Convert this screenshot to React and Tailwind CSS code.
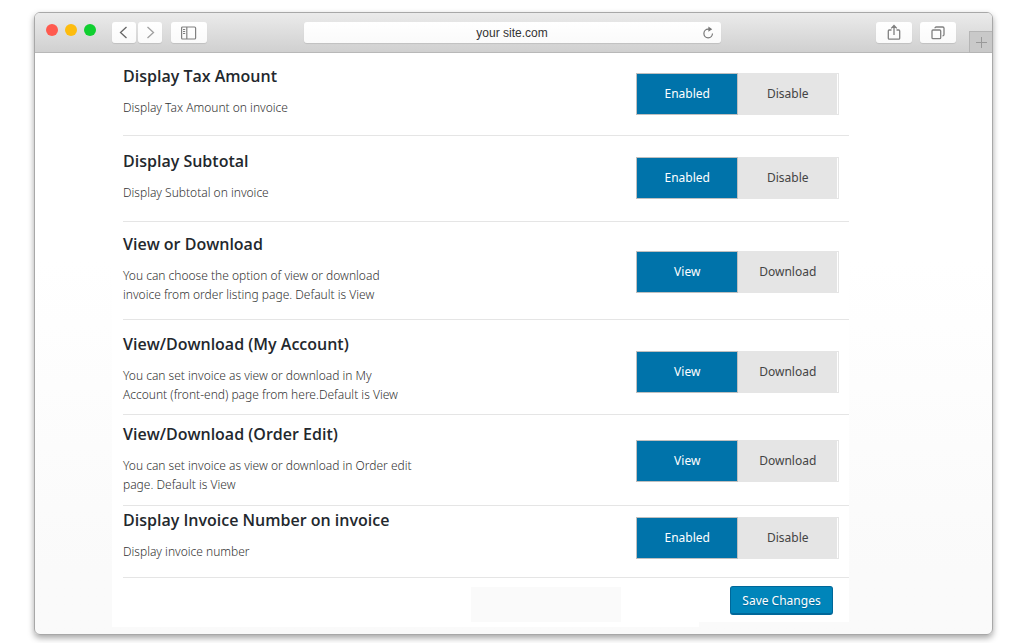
import React, { useState } from 'react';

const SETTINGS = [
  { id: 'tax', title: 'Display Tax Amount', text: 'Display Tax Amount on invoice', options: ['Enabled', 'Disable'], row: 'pt-[11px] pb-[18px]', toggle: 'mt-[9px]' },
  { id: 'subtotal', title: 'Display Subtotal', text: 'Display Subtotal on invoice', options: ['Enabled', 'Disable'], row: 'pt-[13px] pb-[19px]', toggle: 'mt-2' },
  { id: 'listing', title: 'View or Download', text: 'You can choose the option of view or download\ninvoice from order listing page. Default is View', options: ['View', 'Download'], row: 'pt-[10px] pb-[15px]', toggle: 'mt-[19px]' },
  { id: 'account', title: 'View/Download (My Account)', text: 'You can set invoice as view or download in My\nAccount (front-end) page from here.Default is View', options: ['View', 'Download'], row: 'pt-3 pb-[10px]', toggle: 'mt-[19px]' },
  { id: 'order', title: 'View/Download (Order Edit)', text: 'You can set invoice as view or download in Order edit\npage. Default is View', options: ['View', 'Download'], row: 'pt-[7px] pb-[11px]', toggle: 'mt-[18px]' },
  { id: 'number', title: 'Display Invoice Number on invoice', text: 'Display invoice number', options: ['Enabled', 'Disable'], row: 'pt-[2px] pb-4', toggle: 'mt-[9px]' },
];

const toolButton = 'flex h-[21px] items-center justify-center rounded-[3px] bg-gradient-to-b from-white to-[#fafafa] shadow-[0_1px_1px_rgba(0,0,0,0.1)]';

const TitleBar = () => (
  <header className="flex h-10 items-start rounded-t-[5px] border-b border-[#b8b8b8] bg-gradient-to-b from-[#ebebeb] to-[#d0d0d0]">
    <div className="flex gap-[7px] pt-[11px] pl-[11px]">
      <span className="size-3 rounded-full bg-[#ff5a4f]" />
      <span className="size-3 rounded-full bg-[#fdbc0e]" />
      <span className="size-3 rounded-full bg-[#10cf30]" />
    </div>

    <div className="ml-4 flex gap-[2px] pt-[9px]">
      <button aria-label="Back" className={`${toolButton} w-6`}>
        <svg width="24" height="21" fill="none" stroke="#666" strokeWidth="1.3"><path d="M14.5 5 8.5 10.5 14.5 16" /></svg>
      </button>
      <button aria-label="Forward" className={`${toolButton} w-6`}>
        <svg width="24" height="21" fill="none" stroke="#a0a0a0" strokeWidth="1.3"><path d="M9.5 5 15.5 10.5 9.5 16" /></svg>
      </button>
      <button aria-label="Sidebar" className={`${toolButton} ml-[7px] w-9`}>
        <svg width="16" height="14" fill="none" stroke="#808080" strokeWidth="1.2">
          <rect x="0.6" y="1" width="14" height="12" rx="1" />
          <path d="M5.8 1v12M2 3.5h2.2M2 5.5h2.2M2 7.5h2.2" />
        </svg>
      </button>
    </div>

    <div className={`${toolButton} mt-[9px] ml-[97px] mr-[155px] flex-1 pr-[7px] pl-[18px]`}>
      <input aria-label="Address" defaultValue="your site.com" className="w-full min-w-0 bg-transparent text-center font-['Liberation_Sans',sans-serif] text-[12px] leading-5 text-[#333] outline-none" />
      <button aria-label="Reload">
        <svg width="12" height="14" fill="none" stroke="#777" strokeWidth="1.2">
          <path d="M7 3.2H6.2A4.3 4.3 0 1 0 10.5 7.6" />
          <path d="M6.4 .4 10.2 3.2 6.4 5.8z" fill="#777" stroke="none" />
        </svg>
      </button>
    </div>

    <div className="flex gap-2 pt-[9px]">
      <button aria-label="Share" className={`${toolButton} w-9`}>
        <svg width="14" height="17" fill="none" stroke="#808080" strokeWidth="1.3">
          <path d="M4.5 6H2.2Q1.3 6 1.3 7v7.2q0 1 1 1h9.4q1 0 1-1V7q0-1-1-1H9.5M7 11V1.5M4.2 4.4 7 1.5l2.8 2.9" />
        </svg>
      </button>
      <button aria-label="Show all tabs" className={`${toolButton} w-9`}>
        <svg width="14" height="14" fill="none" stroke="#808080" strokeWidth="1.3">
          <rect x="1" y="4" width="8.7" height="8.7" rx="1" />
          <path d="M4 2.3Q4 1 5.2 1h6.5Q13 1 13 2.3v6.2q0 1.3-1.5 1.3" />
        </svg>
      </button>
    </div>
    <button aria-label="New tab" className="mt-[18px] ml-[13px] flex h-[22px] w-[23px] items-center justify-center border border-r-0 border-[#b5b5b5] bg-[#c9c9c9]">
      <svg width="12" height="12" stroke="#999" strokeWidth="1"><path d="M6.5 1v11M1 6.5h11" /></svg>
    </button>
  </header>
);

const Toggle = ({ label, options, value, onChange, className }) => (
  <div role="group" aria-label={label} className={`flex h-[42px] w-[203px] shrink-0 border border-[#e5e5e5] pr-px ${className}`}>
    {options.map(option => (
      <button
        key={option}
        aria-pressed={value === option}
        onClick={() => onChange(option)}
        className={`flex-1 pl-px font-['Noto_Sans',sans-serif] text-[12px] ${value === option ? '-my-px -ml-px border border-[#bfbfbf] bg-[#0073aa] text-white' : 'bg-[#e5e5e5] text-[#444]'}`}
      >
        {option}
      </button>
    ))}
  </div>
);

const App = () => {
  const [values, setValues] = useState(() => Object.fromEntries(SETTINGS.map(s => [s.id, s.options[0]])));

  return (
    <div className="bg-white pt-3 pr-[31px] pb-2 pl-[34px] font-['Open_Sans','Noto_Sans',sans-serif]">
      <div className="rounded-md border border-[#a8a8a8] bg-gradient-to-b from-white from-40% to-[#fafafa] to-90% shadow-[0_3px_6px_rgba(0,0,0,0.35)]">
        <TitleBar />

        <main className="mr-[143px] ml-[77px] pb-[7px]">
          <form onSubmit={e => e.preventDefault()}>
            <div className="bg-white pl-[11px]">
              {SETTINGS.map(s => (
                <section key={s.id} className={`flex items-start justify-between border-b border-[#e5e5e5] pr-[10px] ${s.row}`}>
                  <div>
                    <h2 className="text-[16px] leading-6 font-semibold text-[#23282d]">{s.title}</h2>
                    <p className="mt-[10px] font-['Noto_Sans',sans-serif] text-[12px] leading-[19px] font-light whitespace-pre-line text-[#333]">{s.text}</p>
                  </div>
                  <Toggle
                    label={s.title}
                    options={s.options}
                    value={values[s.id]}
                    onChange={v => setValues({ ...values, [s.id]: v })}
                    className={s.toggle}
                  />
                </section>
              ))}
            </div>

            <div className="flex items-start">
              <div className="flex h-[49px] flex-1 justify-end bg-white pt-[9px] pr-[78px]">
                <div className="h-[35px] w-[150px] bg-[#fafafa]" />
              </div>
              <div className="h-11 w-[150px] bg-white pt-2 pl-[31px]">
                <button type="submit" className="h-[29px] w-[103px] rounded-[3px] border border-b-2 border-[#006799] bg-[#0085ba] pt-px font-['Noto_Sans',sans-serif] text-[12px] text-white [text-shadow:0_1px_1px_#006799]">
                  Save Changes
                </button>
              </div>
            </div>
          </form>
        </main>
      </div>
    </div>
  );
};

export default App;
